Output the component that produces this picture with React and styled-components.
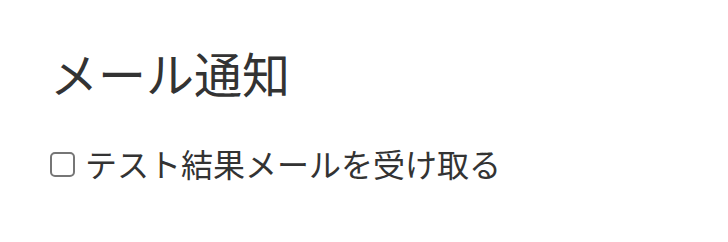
import styled, { createGlobalStyle } from 'styled-components'

const Global = createGlobalStyle`
    html, body {
        margin:0;
        padding:0;
        background-color:#ffffff;
    }
    body {
        font-family:"Noto Sans CJK JP", "Noto Sans", sans-serif;
        color:#333333;
    }
`
const Section = styled.section`
    padding:42px 50px 0 50px;
    display:flex;
    flex-direction:column;
`
const Title = styled.h2`
    margin:0;
    font-size:48px;
    font-weight:400;
    line-height:60px;
`
const Option = styled.label`
    margin-top:37px;
    display:flex;
    align-items:center;
    gap:10px;
    font-size:32px;
    line-height:48px;
    cursor:pointer;
`
const Box = styled.input`
    appearance:none;
    margin:2px 0 0 0;
    width:25px;
    height:25px;
    border:2px solid #767676;
    border-radius:5px;
    background-color:#fff;
    box-sizing:border-box;
`

const MailSettings = () => {
    return (
        <Section>
            <Title>メール通知</Title>
            <Option>
                <Box type="checkbox" />
                テスト結果メールを受け取る
            </Option>
        </Section>
    )
}

export default function App() {
    return (
        <>
            <Global />
            <MailSettings />
        </>
    )
}
